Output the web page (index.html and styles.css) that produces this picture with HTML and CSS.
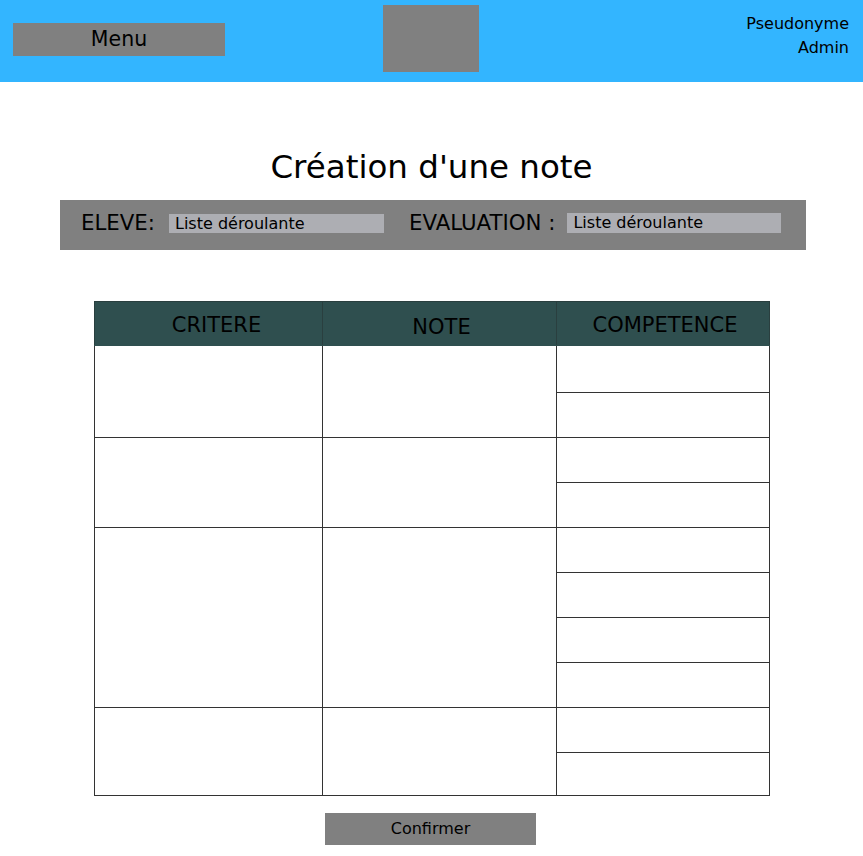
FILE: index.html
```html
<!DOCTYPE html>
<html lang="fr">
<head>
<meta charset="utf-8">
<title>Création d'une note</title>
<link rel="stylesheet" href="styles.css">
</head>
<body>
<header class="topbar">
  <div class="menu-btn">Menu</div>
  <div class="logo"></div>
  <div class="user">
    <div>Pseudonyme</div>
    <div>Admin</div>
  </div>
</header>
<main class="content">
  <h1 class="title">Création d'une note</h1>
  <div class="filters">
    <span class="label">ELEVE:</span>
    <div class="select sel1">Liste déroulante</div>
    <span class="label label2">EVALUATION :</span>
    <div class="select sel2">Liste déroulante</div>
  </div>
  <table class="grid">
    <colgroup>
      <col class="col1">
      <col class="col2">
      <col class="col3">
    </colgroup>
    <thead>
      <tr><th class="h1">CRITERE</th><th class="h2">NOTE</th><th class="h3">COMPETENCE</th></tr>
    </thead>
    <tbody>
      <tr class="r47"><td rowspan="2"></td><td rowspan="2"></td><td></td></tr>
      <tr><td></td></tr>
      <tr><td rowspan="2"></td><td rowspan="2"></td><td></td></tr>
      <tr><td></td></tr>
      <tr><td rowspan="4"></td><td rowspan="4"></td><td></td></tr>
      <tr><td></td></tr>
      <tr><td></td></tr>
      <tr><td></td></tr>
      <tr><td rowspan="2"></td><td rowspan="2"></td><td></td></tr>
      <tr class="r43"><td></td></tr>
    </tbody>
  </table>
  <div class="actions"><div class="confirm">Confirmer</div></div>
</main>
</body>
</html>
```

FILE: styles.css
```css
html, body {
  margin: 0;
  padding: 0;
  background: #ffffff;
  font-family: "DejaVu Sans", sans-serif;
  color: #000;
}
.topbar {
  height: 82px;
  background: #33b5ff;
  display: flex;
  align-items: flex-start;
}
.menu-btn {
  margin: 23px 0 0 13px;
  width: 212px;
  height: 33px;
  background: #808080;
  font-size: 20.5px;
  line-height: 33px;
  text-align: center;
}
.logo {
  margin: 5px 0 0 158px;
  width: 96px;
  height: 67px;
  background: #808080;
}
.user {
  margin: 12px 14px 0 auto;
  text-align: right;
  font-size: 16px;
  line-height: 24px;
}
.content {
  display: flex;
  flex-direction: column;
  align-items: center;
}
.title {
  margin: 65px 0 0 0;
  font-weight: normal;
  font-size: 32.5px;
  line-height: 40px;
  height: 39px;
}
.filters {
  margin-top: 14px;
  margin-left: 3px;
  width: 746px;
  height: 50px;
  background: #808080;
  display: flex;
  align-items: center;
  box-sizing: border-box;
  padding-left: 21px;
}
.label {
  font-size: 21.3px;
  line-height: 24px;
  margin-top: -5px;
}
.label2 { margin-left: 25px; }
.select {
  width: 215px;
  height: 19px;
  background: #adaeb3;
  font-size: 16px;
  line-height: 19px;
  padding-left: 6px;
  box-sizing: border-box;
  margin-top: -3px;
}
.sel1 { margin-left: 14px; }
.sel2 { margin-left: 12px; width: 214px; height: 20px; line-height: 20px; margin-top: -5px; }
.grid {
  margin-top: 51px;
  margin-left: 1px;
  border-collapse: collapse;
  table-layout: fixed;
  width: 675px;
}
.col1 { width: 228px; }
.col2 { width: 234px; }
.col3 { width: 213px; }
.grid th {
  background: #2f4f4f;
  height: 40px;
  padding: 3px 0 0 0;
  font-weight: normal;
  font-size: 21px;
  border: 1px solid #2a3f3f;
  border-bottom: 1px solid #2f4f4f;
  vertical-align: middle;
}
.grid th.h1 { padding-left: 16px; }
.grid th.h2 { padding-left: 4px; padding-top: 6px; height: 37px; }
.grid th.h3 { padding-left: 4px; }
.grid td {
  border: 1px solid #333;
  height: 44px;
  padding: 0;
}
.grid tbody tr.r47 td { height: 46px; }
.grid tbody tr.r43 td { height: 42px; }
.actions {
  margin-top: 17px;
  margin-left: -2px;
}
.confirm {
  width: 211px;
  height: 32px;
  background: #808080;
  font-size: 16px;
  line-height: 32px;
  text-align: center;
}
```
